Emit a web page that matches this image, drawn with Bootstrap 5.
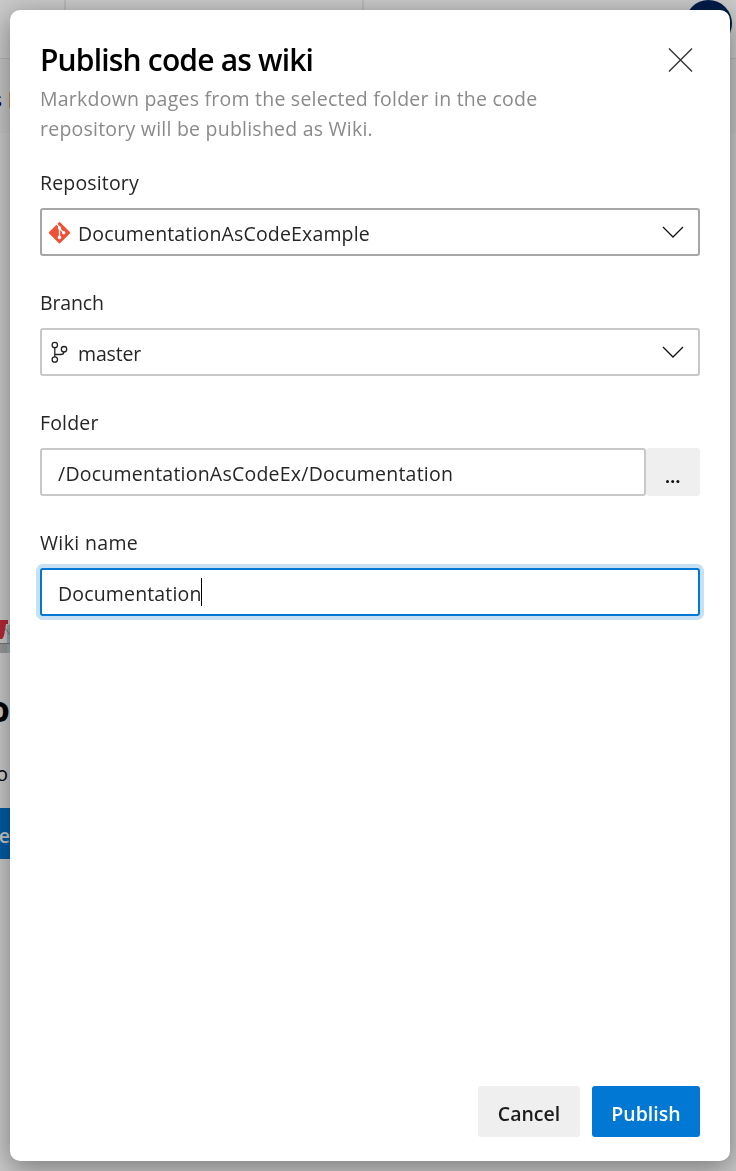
<!DOCTYPE html>
<html lang="en">
<head>
<meta charset="utf-8">
<meta name="viewport" content="width=device-width, initial-scale=1">
<title>Publish code as wiki</title>
<link href="https://cdn.jsdelivr.net/npm/bootstrap@5.3.0/dist/css/bootstrap.min.css" rel="stylesheet">
<style>
  body { font-family: "Segoe UI", "Open Sans", "Noto Sans", sans-serif; font-size: 19.5px; line-height: 30px; color: #262626; height: 1171px; overflow: hidden; background: #c8c8c8; }
  .page-behind { height: 1171px; overflow: hidden; color: #000; }
  .top-strip { height: 59px; border-bottom: 1px solid #b4b4b4; }
  .top-strip .seg { border-right: 2px solid #b8b8b8; height: 58px; }
  .seg-a { width: 66px; } .seg-b { width: 298px; }
  .avatar { width: 47px; height: 47px; background: #001c48; margin-right: 4px; }
  .tool-strip { height: 74px; background: #c4c4c4; }
  .edge { width: 10px; overflow: hidden; white-space: nowrap; }
  .edge-word { margin-right: 7px; color: #000050; }
  .edge-tick { width: 1px; height: 16px; background: #c9933f; flex: none; }
  .edge-art { height: 34px; margin-top: 486px; }
  .edge-title { height: 60px; margin-top: 28px; font-size: 35px; line-height: 56px; font-weight: 700; }
  .edge-copy { height: 30px; margin-top: 18px; font-size: 19.5px; padding-right: 2px; }
  .edge-btn { height: 51px; margin-top: 19px; background: #005ca6; color: #c8c8c8; font-weight: 600; line-height: 55px; }
  .dialog-panel { inset: 10px 6px 10px 10px; border-radius: 10px; background: #fff; box-shadow: 0 10px 28px rgba(0,0,0,.27), 0 2px 24px rgba(0,0,0,.15); padding: 30px 30px 24px; }
  .dialog-title { font-size: 30px; line-height: 40px; font-weight: 600; letter-spacing: -.82px; color: #000; margin: 0; }
  .dialog-copy { color: #8a8a8a; white-space: nowrap; letter-spacing: .23px; margin-top: 4px; }
  .close-x { width: 40px; height: 40px; }
  .field { margin-top: 24px; letter-spacing: .16px; }
  .field + .field { margin-top: 32px; }
  .field label { display: block; line-height: 30px; height: 30px; margin-bottom: 10px; }
  .t-wide { letter-spacing: .35px; }
  .t-tight { letter-spacing: -.15px; }
  .t-path { letter-spacing: .23px; }
  .box { height: 48px; border: 2px solid #c8c8c8; border-radius: 3px; background: #fff; }
  .box span:not(.caret) { padding-top: 3px; }
  .box-hover { border-color: #a6a6a6; }
  .box-focus { border-color: #0078d4; box-shadow: 0 0 0 4px #c7e0f4; }
  .box svg { flex: none; }
  .caret { width: 1px; height: 28px; background: #000; margin-left: -1px; }
  .browse { width: 54px; height: 48px; background: #efefef; border-radius: 3px; }
  .act { height: 51px; border: 0; border-radius: 3px; padding: 4px 0 0; font-size: 19.5px; line-height: 47px; font-weight: 600; }
  .act-cancel { width: 102px; background: #efefef; color: #1c1c1c; }
  .act-publish { width: 108px; background: #0078d4; color: #fff; }
</style>
<script src="https://cdn.jsdelivr.net/npm/bootstrap@5.3.0/dist/js/bootstrap.bundle.min.js"></script>
</head>
<body>
<div class="page-behind" aria-hidden="true">
  <div class="top-strip d-flex">
    <div class="seg seg-a"></div><div class="seg seg-b"></div>
    <div class="avatar rounded-circle ms-auto"></div>
  </div>
  <div class="tool-strip">
    <div class="edge d-flex justify-content-end align-items-center h-100 pt-2"><span class="edge-word">s</span><span class="edge-tick"></span></div>
  </div>
  <div class="edge">
    <svg class="edge-art d-block" width="10" height="34"><path d="M0 25h7v9H0z" fill="#999"/><rect x="7" y="6" width="3" height="28" fill="#9aa9ae"/><path d="M0 1h8v4h-2l-1 6q-1 8-3 9h-2v-9h-1z" fill="#b52736"/><path d="M5 9l5 7M0 24.500h10" stroke="#777" fill="none"/></svg>
    <div class="edge-title d-flex justify-content-end">o</div>
    <div class="edge-copy d-flex justify-content-end">o</div>
    <div class="edge-btn d-flex justify-content-end">e</div>
  </div>
</div>

<main class="dialog-panel position-fixed d-flex flex-column" role="dialog" aria-labelledby="dlg">
  <header class="d-flex justify-content-between">
    <div>
      <h1 class="dialog-title" id="dlg">Publish code as wiki</h1>
      <div class="dialog-copy">Markdown pages from the selected folder in the code<br>repository will be published as Wiki.</div>
    </div>
    <svg class="close-x" viewBox="0 0 40 40" fill="none" stroke="#333" stroke-width="1.4"><path d="M9 8.500l23 23M32 8.500l-23 23"/></svg>
  </header>

  <section class="field">
    <label>Repository</label>
    <div class="box box-hover d-flex align-items-center">
      <svg width="36" height="44" viewBox="0 0 36 44"><path d="M18.300 12.400l9.500 9.500q.8.800 0 1.600l-9.500 9.500q-.8.800-1.600 0l-9.500-9.500q-.8-.8 0-1.600l9.500-9.500q.8-.8 1.600 0z" fill="#f05033"/><path d="M14 13l3.500 4.500v10M17.500 18.500l4 4" fill="none" stroke="#fff" stroke-width="1.300"/><g fill="#fff"><circle cx="17.500" cy="18" r="1.700"/><circle cx="17.500" cy="27.500" r="1.800"/><circle cx="21.700" cy="22.800" r="1.700"/></g></svg>
      <span>DocumentationAsCodeExample</span>
      <svg class="ms-auto" width="36" height="44" fill="none" stroke="#111" stroke-width="1.300"><path d="M1 17L11 27L21 17"/></svg>
    </div>
  </section>
  <section class="field">
    <label class="t-tight">Branch</label>
    <div class="box d-flex align-items-center">
      <svg width="36" height="44" viewBox="0 0 36 44" fill="none" stroke="#222" stroke-width="1.300"><circle cx="12.800" cy="15" r="2.700"/><circle cx="12.800" cy="29.500" r="2.700"/><circle cx="22" cy="19.200" r="2.700"/><path d="M12.800 17.700v9M12.800 24.500h6q3 0 3-2.600"/></svg>
      <span class="t-tight">master</span>
      <svg class="ms-auto" width="36" height="44" fill="none" stroke="#111" stroke-width="1.300"><path d="M1 17L11 27L21 17"/></svg>
    </div>
  </section>
  <section class="field">
    <label>Folder</label>
    <div class="d-flex">
      <div class="box d-flex align-items-center flex-grow-1 ps-3"><span class="t-path">/DocumentationAsCodeEx/Documentation</span></div>
      <div class="browse d-flex justify-content-center"><svg width="54" height="48" fill="#111"><circle cx="21.500" cy="33.500" r="1.500"/><circle cx="26.700" cy="33.500" r="1.500"/><circle cx="31.900" cy="33.500" r="1.500"/></svg></div>
    </div>
  </section>
  <section class="field">
    <label class="t-wide">Wiki name</label>
    <div class="box box-focus d-flex align-items-center ps-3"><span>Documentation</span><span class="caret"></span></div>
  </section>

  <footer class="d-flex justify-content-end gap-2 mt-auto">
    <button class="btn act act-cancel me-1">Cancel</button>
    <button class="btn act act-publish">Publish</button>
  </footer>
</main>
</body>
</html>
